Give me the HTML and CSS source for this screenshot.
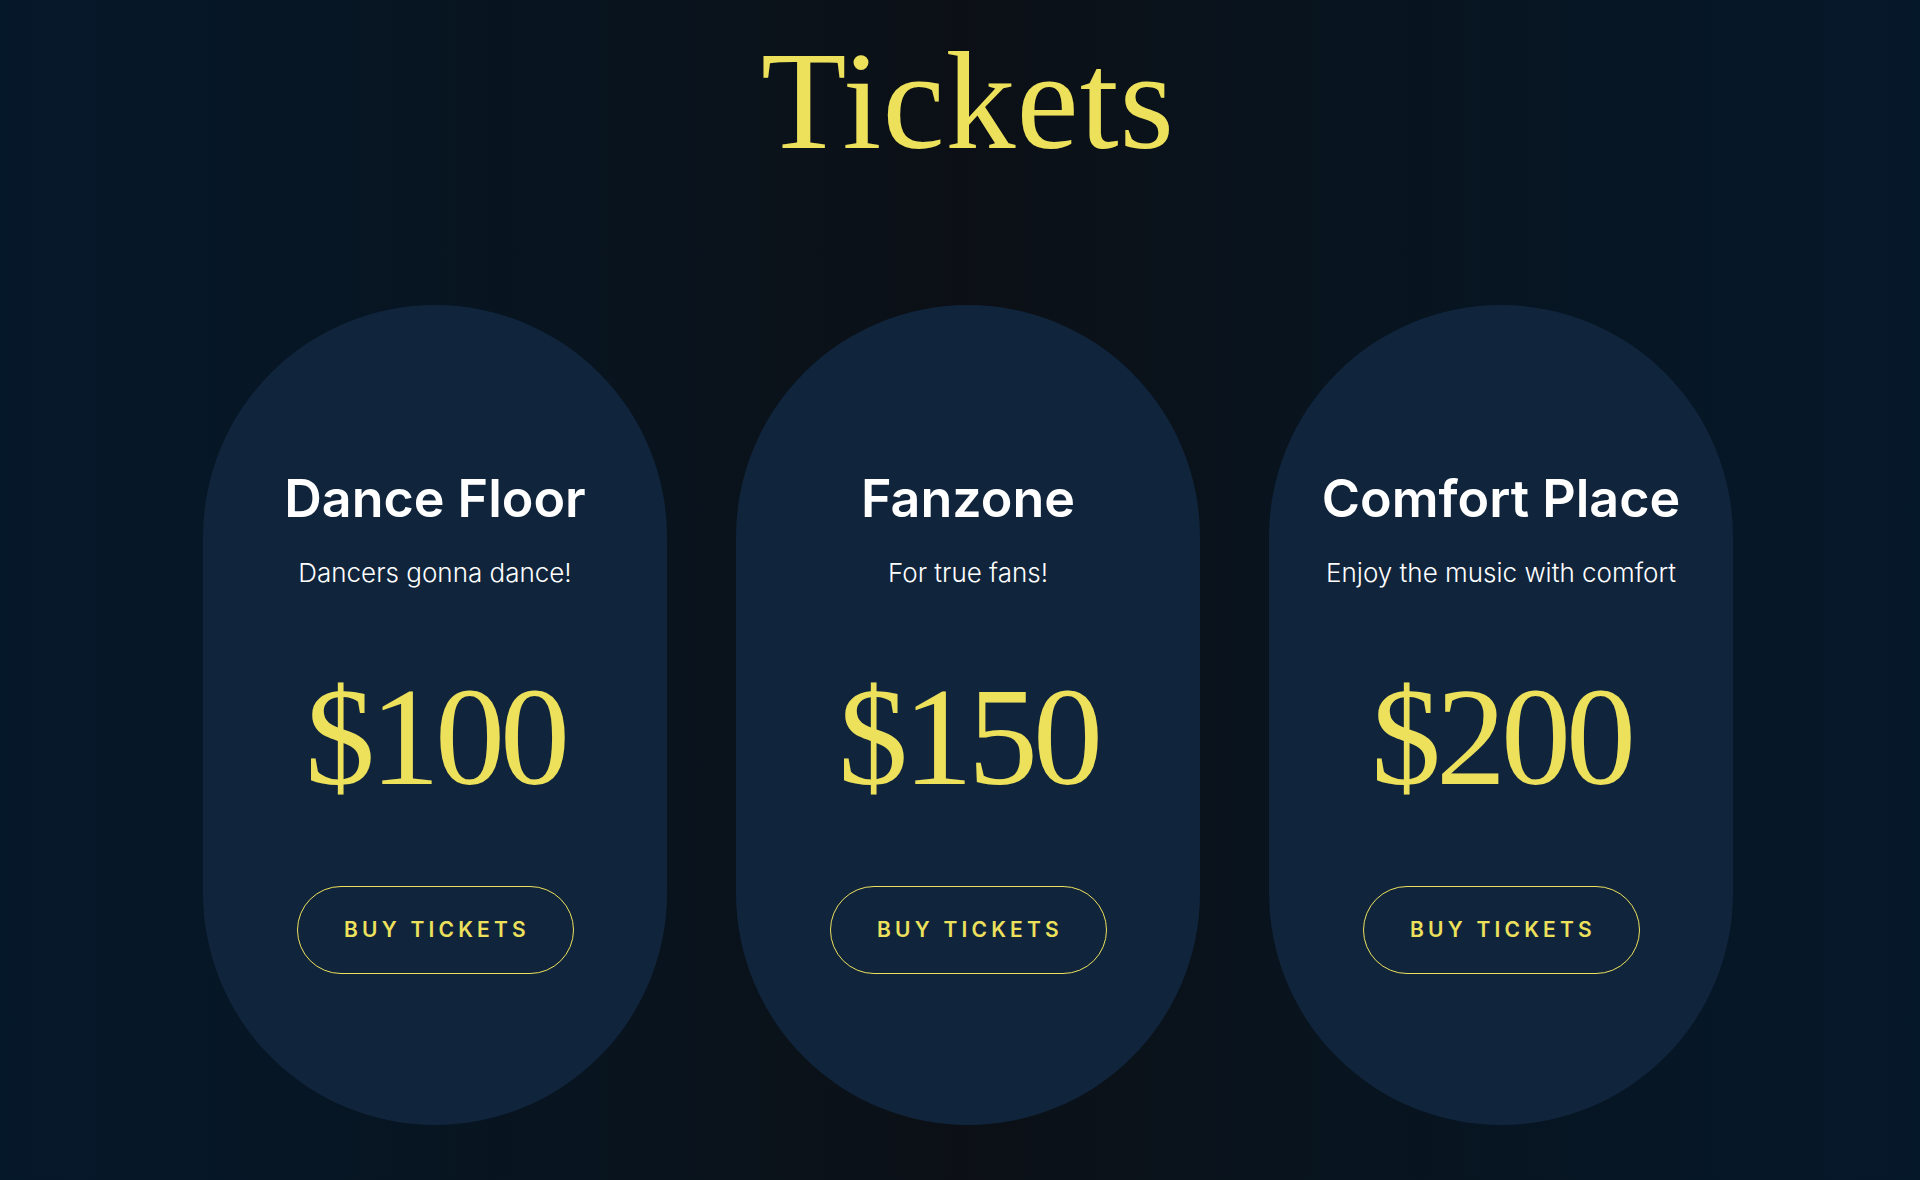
FILE: index.html
```html
<!DOCTYPE html>
<html lang="en">
<head>
    <meta charset="UTF-8">
    <meta name="viewport" content="width=device-width, initial-scale=1.0">
    <title>Tickets</title>
    <link rel="stylesheet" href="styles.css">
</head>
<body>
    <h1 class="page-title">Tickets</h1>

    <div class="tickets">
        <div class="ticket-card">
            <h2 class="ticket-name">Dance Floor</h2>
            <p class="ticket-desc">Dancers gonna dance!</p>
            <div class="ticket-price">$100</div>
            <button class="buy-button">BUY TICKETS</button>
        </div>

        <div class="ticket-card">
            <h2 class="ticket-name">Fanzone</h2>
            <p class="ticket-desc">For true fans!</p>
            <div class="ticket-price">$150</div>
            <button class="buy-button">BUY TICKETS</button>
        </div>

        <div class="ticket-card">
            <h2 class="ticket-name">Comfort Place</h2>
            <p class="ticket-desc">Enjoy the music with comfort</p>
            <div class="ticket-price">$200</div>
            <button class="buy-button">BUY TICKETS</button>
        </div>
    </div>
</body>
</html>
```

FILE: styles.css
```css
body {
    margin: 0;
    height: 1180px;
    overflow: hidden;
    font-family: Inter, "Noto Sans", sans-serif;
    background: linear-gradient(to right, #05182a 0%, #08141f 30%, #0c1016 50%, #08141f 70%, #05182a 100%);
}

.page-title {
    margin: 0;
    padding: 31px 0 0 16px;
    font-family: "Liberation Serif", serif;
    font-weight: normal;
    font-size: 140px;
    line-height: 1;
    letter-spacing: 1px;
    color: #ede15c;
    text-align: center;
}

.tickets {
    display: flex;
    justify-content: center;
    gap: 69px;
    margin-top: 134px;
    padding-left: 16px;
}

.ticket-card {
    width: 464px;
    height: 820px;
    box-sizing: border-box;
    padding-top: 163px;
    background-color: #10253c;
    border-radius: 232px;
    display: flex;
    flex-direction: column;
    align-items: center;
}

.ticket-name {
    margin: 0;
    font-size: 52px;
    font-weight: 600;
    line-height: 1.2;
    color: #ffffff;
}

.ticket-desc {
    margin: 27px 0 0;
    font-size: 26px;
    font-weight: 300;
    line-height: 1.25;
    color: #ffffff;
}

.ticket-price {
    margin-top: 77px;
    font-family: "Liberation Serif", serif;
    font-size: 140px;
    line-height: 1;
    letter-spacing: -5px;
    color: #ede15c;
}

.buy-button {
    margin-top: 79px;
    width: 277px;
    height: 88px;
    padding: 0 0 0 4px;
    background: none;
    border: 1.5px solid #ede15c;
    border-radius: 44px;
    font-family: Inter, "Noto Sans", sans-serif;
    font-size: 21px;
    font-weight: 600;
    letter-spacing: 4.2px;
    color: #ede15c;
    cursor: pointer;
}
```
